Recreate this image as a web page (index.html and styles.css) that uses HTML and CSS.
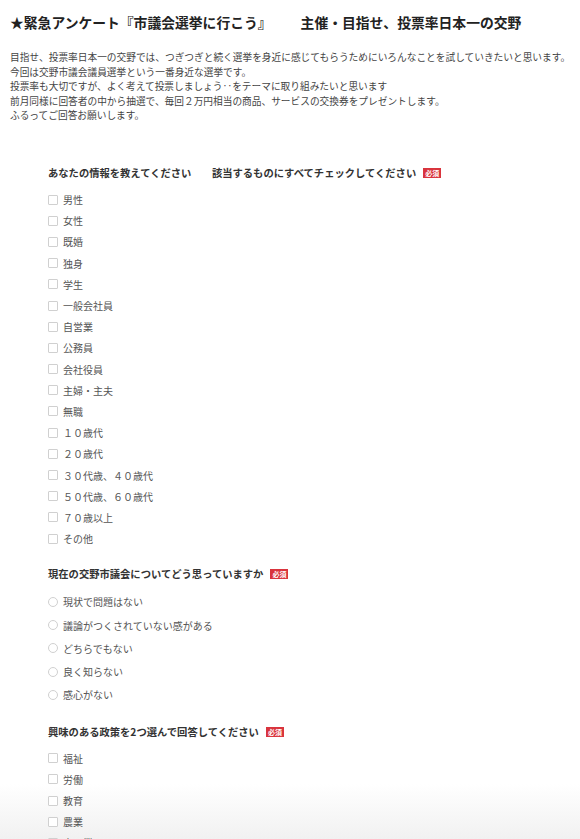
FILE: index.html
```html
<!DOCTYPE html>
<html lang="ja">
<head>
    <meta charset="UTF-8">
    <meta name="viewport" content="width=device-width, initial-scale=1.0">
    <title>緊急アンケート</title>
    <link rel="stylesheet" href="styles.css">
</head>
<body>
    <div class="container">
        <h1 class="form-title">★緊急アンケート『市議会選挙に行こう』<span class="title-sub">主催・目指せ、投票率日本一の交野</span></h1>

        <div class="form-desc">
            <p>目指せ、投票率日本一の交野では、つぎつぎと続く選挙を身近に感じてもらうためにいろんなことを試していきたいと思います。</p>
            <p>今回は交野市議会議員選挙という一番身近な選挙です。</p>
            <p>投票率も大切ですが、よく考えて投票しましょう‥をテーマに取り組みたいと思います</p>
            <p>前月同様に回答者の中から抽選で、毎回２万円相当の商品、サービスの交換券をプレゼントします。</p>
            <p>ふるってご回答お願いします。</p>
        </div>

        <form class="form-body">
            <div class="question">
                <div class="q-title">あなたの情報を教えてください　　該当するものにすべてチェックしてください<span class="req">必須</span></div>
                <ul class="choices">
                    <li><label><input type="checkbox" name="q1"><span>男性</span></label></li>
                    <li><label><input type="checkbox" name="q1"><span>女性</span></label></li>
                    <li><label><input type="checkbox" name="q1"><span>既婚</span></label></li>
                    <li><label><input type="checkbox" name="q1"><span>独身</span></label></li>
                    <li><label><input type="checkbox" name="q1"><span>学生</span></label></li>
                    <li><label><input type="checkbox" name="q1"><span>一般会社員</span></label></li>
                    <li><label><input type="checkbox" name="q1"><span>自営業</span></label></li>
                    <li><label><input type="checkbox" name="q1"><span>公務員</span></label></li>
                    <li><label><input type="checkbox" name="q1"><span>会社役員</span></label></li>
                    <li><label><input type="checkbox" name="q1"><span>主婦・主夫</span></label></li>
                    <li><label><input type="checkbox" name="q1"><span>無職</span></label></li>
                    <li><label><input type="checkbox" name="q1"><span>１０歳代</span></label></li>
                    <li><label><input type="checkbox" name="q1"><span>２０歳代</span></label></li>
                    <li><label><input type="checkbox" name="q1"><span>３０代歳、４０歳代</span></label></li>
                    <li><label><input type="checkbox" name="q1"><span>５０代歳、６０歳代</span></label></li>
                    <li><label><input type="checkbox" name="q1"><span>７０歳以上</span></label></li>
                    <li><label><input type="checkbox" name="q1"><span>その他</span></label></li>
                </ul>
            </div>

            <div class="question">
                <div class="q-title">現在の交野市議会についてどう思っていますか<span class="req">必須</span></div>
                <ul class="choices radios">
                    <li><label><input type="radio" name="q2"><span>現状で問題はない</span></label></li>
                    <li><label><input type="radio" name="q2"><span>議論がつくされていない感がある</span></label></li>
                    <li><label><input type="radio" name="q2"><span>どちらでもない</span></label></li>
                    <li><label><input type="radio" name="q2"><span>良く知らない</span></label></li>
                    <li><label><input type="radio" name="q2"><span>感心がない</span></label></li>
                </ul>
            </div>

            <div class="question">
                <div class="q-title">興味のある政策を2つ選んで回答してください<span class="req">必須</span></div>
                <ul class="choices">
                    <li><label><input type="checkbox" name="q3"><span>福祉</span></label></li>
                    <li><label><input type="checkbox" name="q3"><span>労働</span></label></li>
                    <li><label><input type="checkbox" name="q3"><span>教育</span></label></li>
                    <li><label><input type="checkbox" name="q3"><span>農業</span></label></li>
                    <li><label><input type="checkbox" name="q3"><span>商工業</span></label></li>
                    <li><label><input type="checkbox" name="q3"><span>環境</span></label></li>
                </ul>
            </div>
        </form>
    </div>
</body>
</html>
```

FILE: styles.css
```css
* {
    margin: 0;
    padding: 0;
    box-sizing: border-box;
}

body {
    font-family: "Noto Sans CJK JP", "Noto Sans", sans-serif;
    background: #fff linear-gradient(to bottom, #fff calc(100% - 55px), #f1f1f1) fixed;
    color: #444;
}

.container {
    padding: 12px 2px 40px 10px;
}

.form-title {
    font-size: 13.8px;
    line-height: 20px;
    font-weight: 700;
    color: #222;
    white-space: nowrap;
}

.title-sub {
    margin-left: 29px;
}

.form-desc {
    margin-top: 18px;
    font-size: 9.7px;
    line-height: 14.6px;
    color: #444;
    white-space: nowrap;
}

.form-body {
    margin-top: 42px;
    padding-left: 38px;
}

.question {
    margin-bottom: 17px;
}

.q-title {
    display: flex;
    align-items: center;
    font-size: 10.3px;
    line-height: 16px;
    font-weight: 700;
    color: #333;
    white-space: nowrap;
}

.req {
    display: inline-block;
    margin-left: 7px;
    padding: 0 2px;
    background: #d9343d;
    color: #fff;
    font-size: 7px;
    line-height: 10px;
    font-weight: 700;
}

.choices {
    list-style: none;
    margin-top: 8px;
}

.choices li {
    height: 21.2px;
    display: flex;
    align-items: center;
}

.choices.radios li {
    height: 23.3px;
}

.choices label {
    display: flex;
    align-items: center;
    gap: 5px;
    font-size: 10px;
    color: #555;
}

.choices input {
    appearance: none;
    -webkit-appearance: none;
    width: 10px;
    height: 10px;
    margin: 0;
    border: 1px solid #d0d0d0;
    border-radius: 1px;
    background: #fff;
    flex-shrink: 0;
}

.choices input[type="radio"] {
    border-radius: 50%;
}
```
